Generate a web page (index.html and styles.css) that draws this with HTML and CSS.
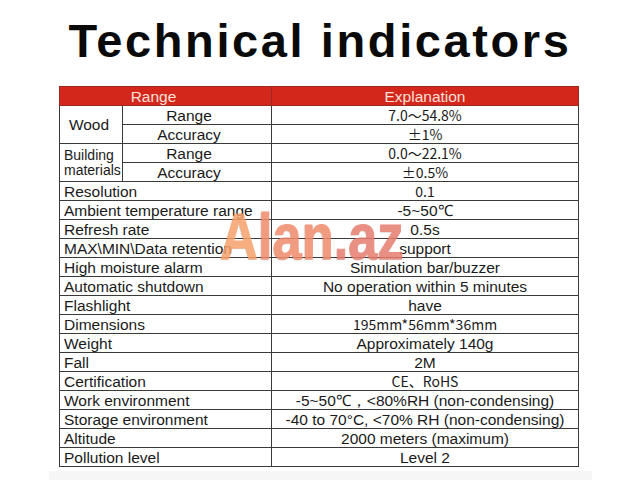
FILE: index.html
```html
<!DOCTYPE html>
<html lang="en">
  <head>
    <meta charset="utf-8" />
    <title>Technical indicators</title>
    <link rel="stylesheet" href="styles.css">
  </head>
  <body>
    <div class="sheet">
      <h1 class="sheet__title">Technical indicators</h1>

      <div class="specs">
        <table class="specs__table">
          <colgroup>
            <col class="specs__col-a" />
            <col class="specs__col-b" />
            <col class="specs__col-c" />
          </colgroup>
          <tr class="specs__head">
            <th colspan="2" class="specs__head-range">Range</th>
            <th>Explanation</th>
          </tr>
          <tr>
            <td rowspan="2" class="specs__group">Wood</td>
            <td class="specs__sub">Range</td>
            <td class="specs__val cjk">7.0～54.8%</td>
          </tr>
          <tr>
            <td class="specs__sub">Accuracy</td>
            <td class="specs__val cjk">±1%</td>
          </tr>
          <tr>
            <td rowspan="2" class="specs__group specs__group--small">Building<br>materials</td>
            <td class="specs__sub">Range</td>
            <td class="specs__val cjk">0.0～22.1%</td>
          </tr>
          <tr>
            <td class="specs__sub">Accuracy</td>
            <td class="specs__val cjk">±0.5%</td>
          </tr>
          <tr><td colspan="2" class="specs__name">Resolution</td><td class="specs__val cjk">0.1</td></tr>
          <tr><td colspan="2" class="specs__name">Ambient temperature range</td><td class="specs__val">-5~50℃</td></tr>
          <tr><td colspan="2" class="specs__name">Refresh rate</td><td class="specs__val">0.5s</td></tr>
          <tr><td colspan="2" class="specs__name">MAX\MIN\Data retention</td><td class="specs__val">support</td></tr>
          <tr><td colspan="2" class="specs__name">High moisture alarm</td><td class="specs__val">Simulation bar/buzzer</td></tr>
          <tr><td colspan="2" class="specs__name">Automatic shutdown</td><td class="specs__val">No operation within 5 minutes</td></tr>
          <tr><td colspan="2" class="specs__name">Flashlight</td><td class="specs__val">have</td></tr>
          <tr><td colspan="2" class="specs__name">Dimensions</td><td class="specs__val cjk">195mm*56mm*36mm</td></tr>
          <tr><td colspan="2" class="specs__name">Weight</td><td class="specs__val">Approximately 140g</td></tr>
          <tr><td colspan="2" class="specs__name">Fall</td><td class="specs__val">2M</td></tr>
          <tr><td colspan="2" class="specs__name">Certification</td><td class="specs__val cjk">CE、RoHS</td></tr>
          <tr><td colspan="2" class="specs__name">Work environment</td><td class="specs__val">-5~50℃，&lt;80%RH (non-condensing)</td></tr>
          <tr><td colspan="2" class="specs__name">Storage environment</td><td class="specs__val">-40 to 70°C, &lt;70% RH (non-condensing)</td></tr>
          <tr><td colspan="2" class="specs__name">Altitude</td><td class="specs__val">2000 meters (maximum)</td></tr>
          <tr><td colspan="2" class="specs__name">Pollution level</td><td class="specs__val">Level 2</td></tr>
        </table>

        <!-- watermark sits over the table -->
        <span class="specs__mark"><span class="specs__mark-a">A</span><span class="specs__mark-b">lan</span><span class="specs__mark-c">.az</span></span>
      </div>

      <div class="sheet__foot"></div>
    </div>
  </body>
</html>
```

FILE: styles.css
```css
* {
	box-sizing: border-box;
}

body {
	margin: 0;
	background: #ffffff;
	font-family: "Liberation Sans", Arial, sans-serif;
	color: #1a1a1a;
}

.sheet {
	width: 640px;
	height: 480px;
	overflow: hidden;
}

.sheet__title {
	margin: 11px 0 0;
	height: 60px;
	line-height: 60px;
	font-size: 47px;
	font-weight: bold;
	letter-spacing: 2.6px;
	text-align: center;
	color: #0a0a0a;
}

.specs {
	position: relative;
	margin: 15px 0 0 59px;
	width: 519px;
}

.specs__table {
	width: 519px;
	border-collapse: collapse;
	table-layout: fixed;
	font-size: 15.5px;
}

.specs__col-a { width: 63px; }
.specs__col-b { width: 149px; }
.specs__col-c { width: 307px; }

.specs__table tr {
	height: 19px;
}

.specs__table td,
.specs__table th {
	border: 1px solid #3a3a3a;
	padding: 0;
	height: 19px;
	line-height: 17px;
	white-space: nowrap;
	overflow: hidden;
}

.specs__head th {
	background: #d4271c;
	border-color: #9c2a22;
	color: #fbe0da;
	font-weight: normal;
	text-align: center;
}

.specs__head-range {
	padding-right: 24px !important;
}

.specs__group {
	text-align: center;
	padding-right: 4px !important;
}

.specs__group--small {
	text-align: left;
	padding-left: 4px !important;
	font-size: 14px;
	line-height: 15px !important;
}

.specs__sub {
	text-align: center;
	padding-right: 16px !important;
}

.specs__name {
	padding-left: 4px !important;
	text-align: left;
}

.specs__val {
	text-align: center;
}

.cjk {
	font-family: "Noto Sans CJK SC", "Liberation Sans", sans-serif;
	font-size: 14px;
}

.specs__mark {
	position: absolute;
	left: 161px;
	top: 119px;
	font-size: 64px;
	font-weight: bold;
	line-height: 64px;
	transform: scaleX(0.82);
	transform-origin: left top;
	opacity: 0.85;
	white-space: nowrap;
	-webkit-text-stroke: 1px currentColor;
	text-shadow: -1px 1px 1px rgba(120, 50, 20, 0.35);
}

.specs__mark-a { color: #f6a06a; }
.specs__mark-b { color: #ef8a6c; }
.specs__mark-c { color: #e67c6e; }

.sheet__foot {
	margin: 4px 0 0 49px;
	width: 543px;
	height: 20px;
	background: #f6f6f6;
}
```
